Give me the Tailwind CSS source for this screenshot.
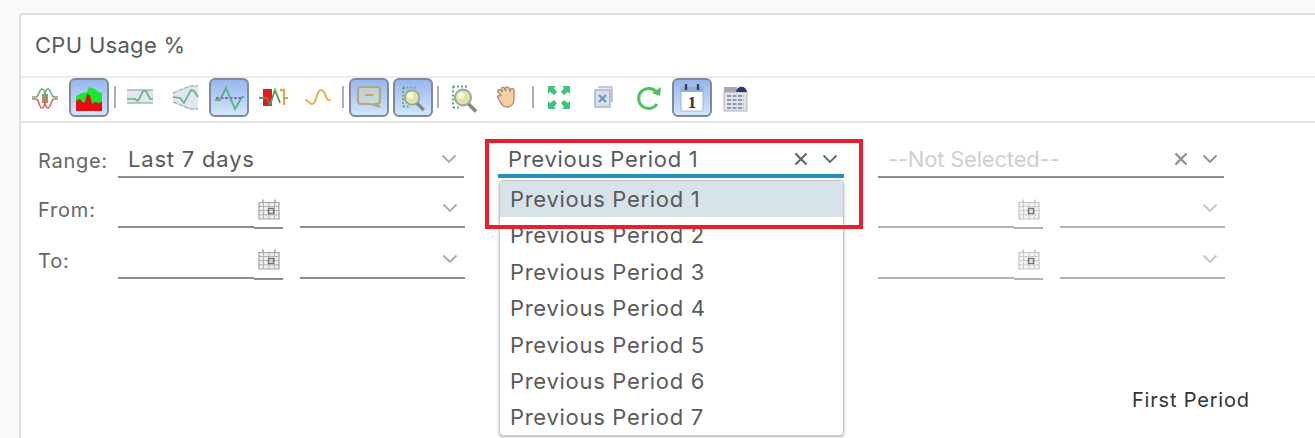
<!DOCTYPE html>
<html lang="en">

<head>
  <meta charset="UTF-8" />
  <title>CPU Usage</title>
  <script src="https://cdn.jsdelivr.net/npm/@tailwindcss/browser@4"></script>
</head>

<body class="relative h-[438px] w-[1315px] overflow-hidden bg-[#f9f9f9] font-['Inter',sans-serif] text-[#5a5a5a]">
  <svg class="hidden">
    <defs>
      <symbol id="chev" viewBox="0 0 16 10">
        <path d="M1.5 1.5 8 8l6.5-6.5" fill="none" stroke="currentColor" stroke-width="1.8" />
      </symbol>
      <symbol id="cross" viewBox="0 0 14 14">
        <path d="M1.5 1.5 12.5 12.5M12.5 1.5 1.5 12.5" fill="none" stroke="currentColor" stroke-width="2.2" />
      </symbol>
      <symbol id="cal" viewBox="0 0 22 21">
        <path d="M1 3.5h20V20H1z" fill="currentColor" fill-opacity=".18" stroke="currentColor" stroke-width="1.2" />
        <path d="M1 7.5h20M1 11.5h20M1 15.8h20M5.500 4v16M11 4v16M16.500 4v16" stroke="currentColor" stroke-width=".8" fill="none" />
        <path d="M5 .5v3M17 .5v3" stroke="currentColor" stroke-width="1.6" />
        <rect x="10.500" y="9.500" width="5" height="5" fill="none" stroke="#777" stroke-width="1.4" />
      </symbol>
      <symbol id="lens" viewBox="0 0 40 38">
        <path d="M9 8h16M9 8v21M9 29h6" fill="none" stroke="#4fb070" stroke-width="2" stroke-dasharray="2 2" />
        <path d="M24 25l8 8" stroke="#7d8a7c" stroke-width="3.6" />
        <circle cx="19" cy="19" r="8" fill="#dfe3a8" stroke="#9ba59a" stroke-width="2" />
        <circle cx="17" cy="17" r="3.500" fill="#f6f7de" />
      </symbol>
    </defs>
  </svg>

  <div class="ml-[19px] mt-[13px] h-[430px] w-[1320px] rounded-tl-[4px] border-2 border-[#dfdfdf] bg-white">
    <div class="flex h-[63px] items-center border-b-2 border-[#ececec] pl-[14px] text-[22px] tracking-[.3px]">CPU Usage %</div>

    <div class="flex h-[45px] gap-[4.4px] border-b-2 border-[#e4e4e4] pl-[4px]">
      <svg class="h-[39px] w-[40px]" viewBox="0 0 40 39">
        <rect x="17" y="16" width="6" height="9" fill="#b58b6c" />
        <path d="M7 19h4c3 0 3-8 6-8s3 8 3 8 0-8 3-8 3 8 6 8h4" fill="none" stroke="#5cb978" stroke-width="1.6" />
        <path d="M7 21h4c3 0 3 9 6 9s3-9 3-9 0 9 3 9 3-9 6-9h4" fill="none" stroke="#d9646a" stroke-width="1.6" />
      </svg>
      <div class="h-[39px] w-[40px] rounded-[6px] border-2 border-[#7f8b99] bg-gradient-to-b from-[#97b7ee] to-[#d3e5fd]">
        <svg class="h-[35px] w-[36px]" viewBox="0 0 36 35">
          <path d="M5 16l6-3 5-1 2-5 6 2 3 3 4 1v13H5z" fill="#17e82c" />
          <path d="M5 31V21l3-2 2 1 2 3 2-1 2-8 3 1 2 9 3-2 3 1 4-1v9z" fill="#e80c10" />
        </svg>
      </div>
      <div class="mt-[8px] h-[22px] w-[2px] bg-[#aab0b5]"></div>
      <svg class="h-[39px] w-[40px]" viewBox="0 0 40 39">
        <rect x="7" y="12" width="26" height="13" fill="#dfe8f0" />
        <path d="M7 12h26M7 25h26" stroke="#a7b6b5" stroke-width="1.6" />
        <path d="M7 21h8l3 2 5-10h3l4 8h3" fill="none" stroke="#66b386" stroke-width="1.7" />
      </svg>
      <svg class="h-[39px] w-[40px]" viewBox="0 0 40 39">
        <path d="M8 15l17-7h8v23h-8L8 24z" fill="#dfe6ee" />
        <path d="M8 15l17-7h8M8 24l17 7h8" fill="none" stroke="#a7b6b5" stroke-width="1.4" stroke-dasharray="5 1" />
        <path d="M8 19l7 1 4 5 7-13 3 1 4 6" fill="none" stroke="#66b386" stroke-width="1.7" />
      </svg>
      <div class="h-[39px] w-[40px] rounded-[6px] border-2 border-[#7f8b99] bg-gradient-to-b from-[#97b7ee] to-[#d3e5fd]">
        <svg class="h-[35px] w-[36px]" viewBox="0 0 36 35">
          <path d="M5 18h26" stroke="#a4309a" stroke-width="1.6" stroke-dasharray="3 1.5" />
          <path d="M4 20h5l6-12 9 21 7-12h2" fill="none" stroke="#4fb585" stroke-width="1.8" />
        </svg>
      </div>
      <svg class="h-[39px] w-[40px]" viewBox="0 0 40 39">
        <rect x="10" y="11" width="9" height="17" fill="#e21c1c" />
        <path d="M11 20h3l3 7" fill="none" stroke="#8d7440" stroke-width="1.8" />
        <path d="M6 20h5M17 27l5-15 5 13" fill="none" stroke="#4f9f66" stroke-width="1.9" />
        <path d="M27 12h4v15" fill="none" stroke="#e4a74a" stroke-width="2.400" />
        <path d="M31 20h4" stroke="#72b184" stroke-width="1.6" />
      </svg>
      <svg class="h-[39px] w-[40px]" viewBox="0 0 40 39">
        <path d="M7 22c3 0 4 4 7 4 5 0 4-14 9-14s4 10 8 10h2" fill="none" stroke="#e5b458" stroke-width="2.200" />
      </svg>
      <div class="mt-[8px] h-[22px] w-[2px] bg-[#aab0b5]"></div>
      <div class="h-[39px] w-[40px] rounded-[6px] border-2 border-[#7f8b99] bg-gradient-to-b from-[#97b7ee] to-[#d3e5fd]">
        <svg class="h-[35px] w-[36px]" viewBox="0 0 36 35">
          <path d="M10 7h16a3 3 0 0 1 3 3v11a3 3 0 0 1-3 3h-3l6 3-9-3H10a3 3 0 0 1-3-3V10a3 3 0 0 1 3-3z" fill="#cfdcc8" fill-opacity=".6" stroke="#b9a67f" stroke-width="2.2" />
          <path d="M14 15h8" stroke="#e2a04a" stroke-width="2" />
        </svg>
      </div>
      <div class="h-[39px] w-[40px] rounded-[6px] border-2 border-[#7f8b99] bg-gradient-to-b from-[#97b7ee] to-[#d3e5fd]">
        <svg class="h-[35px] w-[36px]" viewBox="0 0 40 38"><use href="#lens" /></svg>
      </div>
      <div class="mt-[8px] h-[22px] w-[2px] bg-[#aab0b5]"></div>
      <svg class="h-[39px] w-[40px]" viewBox="0 0 40 39"><use href="#lens" /></svg>
      <svg class="h-[39px] w-[40px]" viewBox="0 0 40 39">
        <path d="M13 17l-3-3c-1-2 1-3 2.500-2l2 2-1-3c0-2 2-2 3-1l1 3 0-3c1-1.500 3-1.500 3.500 0l1 3 1-2c1-1 3-.5 3 1v9c0 5-3 8-7 8-3 0-5-2-6-4l-3-5c-1-2 1-3 2-2z" fill="#f3d0a4" stroke="#a88d78" stroke-width="1.400" />
      </svg>
      <div class="mt-[8px] h-[22px] w-[2px] bg-[#aab0b5]"></div>
      <svg class="h-[39px] w-[40px]" viewBox="0 0 40 39">
        <path d="M9 8h8l-2 2 3 4-3 3-4-3-2 2zM31 8h-8l2 2-3 4 3 3 4-3 2 2zM9 31h8l-2-2 3-4-3-3-4 3-2-2zM31 31h-8l2-2-3-4 3-3 4 3 2-2z" fill="#3fc27c" />
      </svg>
      <svg class="h-[39px] w-[40px]" viewBox="0 0 40 39">
        <path d="M15 9h14v15" fill="#e5e9ee" stroke="#b4bcc6" stroke-width="1.500" />
        <rect x="12" y="12" width="15" height="17" fill="#d5e1f0" stroke="#aeb7c2" stroke-width="1.500" />
        <path d="M16 17l7 7M23 17l-7 7" stroke="#6f93c5" stroke-width="2.200" />
      </svg>
      <svg class="h-[39px] w-[40px]" viewBox="0 0 40 39">
        <path d="M29 15a10 10 0 1 0 0 11" fill="none" stroke="#4cc166" stroke-width="3" />
        <path d="M24 15l8 3 1-9z" fill="#4cc166" />
      </svg>
      <div class="h-[39px] w-[40px] rounded-[6px] border-2 border-[#7f8b99] bg-gradient-to-b from-[#97b7ee] to-[#d3e5fd]">
        <svg class="h-[35px] w-[36px]" viewBox="0 0 36 35">
          <rect x="7" y="7" width="22" height="24" fill="#fdfdfd" stroke="#a9b4c2" />
          <path d="M7 7h22v5H7z" fill="#8fb0dd" />
          <path d="M12 4v6M24 4v6" stroke="#2f4468" stroke-width="2.400" />
          <text x="18" y="28" text-anchor="middle" font-family="'Liberation Serif',serif" font-weight="700" font-size="17" fill="#333">1</text>
        </svg>
      </div>
      <svg class="h-[39px] w-[40px]" viewBox="0 0 40 39">
        <rect x="8" y="14" width="23" height="19" fill="#dfe3ea" stroke="#b0b6c0" />
        <path d="M8 9h13v5H8z" fill="#a5a9b2" />
        <path d="M20 14c1-7 10-7 11 0z" fill="#27396f" />
        <path d="M11 18h17M11 22h17M11 26h17M11 30h17" stroke="#9198a6" stroke-width="2" stroke-dasharray="4 1.500" />
      </svg>
    </div>

    <div class="pl-[17px] pt-[17px]">
      <div class="flex h-[38px] items-end">
        <div class="w-[80px] pb-[2px] text-[20px] tracking-[.7px] text-[#666]">Range:</div>
        <div class="flex h-full w-[346px] items-center border-b-2 border-[#8d8d8d] pl-[10px] pr-[7px] pt-[2px] text-[22px] tracking-[.8px]">
          <span class="grow">Last 7 days</span>
          <svg class="h-[10px] w-[16px] text-[#aaa]"><use href="#chev" /></svg>
        </div>
        <div class="relative ml-[34px] flex h-full w-[346px] items-center border-b-[4px] border-[#1f93c4] pl-[10px] pr-[6px] pt-[4px] text-[22px] tracking-[.7px]">
          <span class="grow">Previous Period 1</span>
          <svg class="mr-[14px] h-[14px] w-[14px] text-[#666]"><use href="#cross" /></svg>
          <svg class="h-[10px] w-[16px] text-[#666]"><use href="#chev" /></svg>
          <ul class="absolute left-[1px] top-[40px] z-10 h-[256px] w-[345px] overflow-hidden rounded-[4px] border border-[#c9c9c9] bg-white text-[22px] leading-[36.4px] tracking-[.7px] shadow-[0_1px_3px_rgba(0,0,0,0.3)]">
            <li class="h-[36.4px] bg-[#d8e2e9] pl-[10px]">Previous Period 1</li>
            <li class="h-[36.4px] pl-[10px]">Previous Period 2</li>
            <li class="h-[36.4px] pl-[10px]">Previous Period 3</li>
            <li class="h-[36.4px] pl-[10px]">Previous Period 4</li>
            <li class="h-[36.4px] pl-[10px]">Previous Period 5</li>
            <li class="h-[36.4px] pl-[10px]">Previous Period 6</li>
            <li class="h-[36.4px] pl-[10px]">Previous Period 7</li>
          </ul>
        </div>
        <div class="ml-[34px] flex h-full w-[346px] items-center border-b-2 border-[#8d8d8d] pl-[10px] pr-[6px] pt-[2px] text-[22px] tracking-[-.2px] text-[#cfcfcf]">
          <span class="grow">--Not Selected--</span>
          <svg class="mr-[14px] h-[14px] w-[14px] text-[#8e8e8e]"><use href="#cross" /></svg>
          <svg class="h-[10px] w-[16px] text-[#8e8e8e]"><use href="#chev" /></svg>
        </div>
      </div>

      <div class="flex h-[50px] items-end">
        <div class="w-[80px] pb-[3px] text-[20px] tracking-[.8px] text-[#666]">From:</div>
        <div class="flex h-full w-[136px] border-b-2 border-[#8d8d8d]"></div>
        <div class="flex h-[51px] w-[29px] -mb-[1px] items-center justify-center border-b-2 border-[#8d8d8d] pt-[17px] pb-[3px]">
          <svg class="h-[21px] w-[22px] text-[#a3a3a3]"><use href="#cal" /></svg>
        </div>
        <div class="ml-[17px] flex h-full w-[165px] justify-end border-b-2 border-[#8d8d8d] pr-[7px] pt-[25px]">
          <svg class="h-[10px] w-[16px] text-[#aaa]"><use href="#chev" /></svg>
        </div>
        <div class="ml-[33px] w-[346px]"></div>
        <div class="ml-[34px] flex h-full w-[136px] border-b-2 border-[#b3b3b3]"></div>
        <div class="flex h-[51px] w-[29px] -mb-[1px] items-center justify-center border-b-2 border-[#b3b3b3] pt-[17px] pb-[3px]">
          <svg class="h-[21px] w-[22px] text-[#c4c4c4]"><use href="#cal" /></svg>
        </div>
        <div class="ml-[17px] flex h-full w-[165px] justify-end border-b-2 border-[#b3b3b3] pr-[7px] pt-[25px]">
          <svg class="h-[10px] w-[16px] text-[#c4c4c4]"><use href="#chev" /></svg>
        </div>
      </div>

      <div class="flex h-[51px] items-end">
        <div class="w-[80px] pb-[3px] text-[20px] tracking-[.8px] text-[#666]">To:</div>
        <div class="flex h-full w-[136px] border-b-2 border-[#8d8d8d]"></div>
        <div class="flex h-[52px] w-[29px] -mb-[1px] items-center justify-center border-b-2 border-[#8d8d8d] pt-[16px] pb-[3px]">
          <svg class="h-[21px] w-[22px] text-[#a3a3a3]"><use href="#cal" /></svg>
        </div>
        <div class="ml-[17px] flex h-full w-[165px] justify-end border-b-2 border-[#8d8d8d] pr-[7px] pt-[26px]">
          <svg class="h-[10px] w-[16px] text-[#aaa]"><use href="#chev" /></svg>
        </div>
        <div class="ml-[33px] w-[346px]"></div>
        <div class="ml-[34px] flex h-full w-[136px] border-b-2 border-[#b3b3b3]"></div>
        <div class="flex h-[52px] w-[29px] -mb-[1px] items-center justify-center border-b-2 border-[#b3b3b3] pt-[16px] pb-[3px]">
          <svg class="h-[21px] w-[22px] text-[#c4c4c4]"><use href="#cal" /></svg>
        </div>
        <div class="ml-[17px] flex h-full w-[165px] justify-end border-b-2 border-[#b3b3b3] pr-[7px] pt-[26px]">
          <svg class="h-[10px] w-[16px] text-[#c4c4c4]"><use href="#chev" /></svg>
        </div>
      </div>

      <div class="ml-[1094px] mt-[106px] text-[20px] tracking-[.8px] text-[#333]">First Period</div>
    </div>
  </div>

  <!-- red callout drawn over the screenshot -->
  <div class="absolute left-[485px] top-[139px] z-20 h-[90px] w-[378px] border-[4px] border-[#e8202e]"></div>
</body>

</html>
